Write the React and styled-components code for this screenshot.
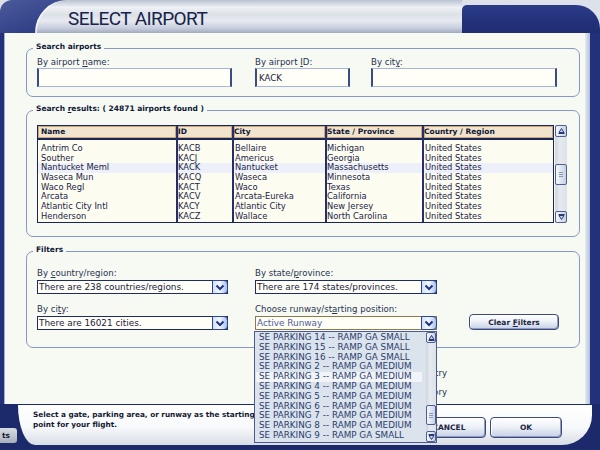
import React from 'react';
import styled, { createGlobalStyle } from 'styled-components';

const NAVY = '#22317a';
const PANEL = '#f6faf3';
const FONT = '"DejaVu Sans", Verdana, sans-serif';

const GlobalStyle = createGlobalStyle`
  html, body { margin: 0; padding: 0; background: #dde2ea; }
  body { font-family: ${FONT}; }
  #root { width: 600px; height: 450px; }
`;

const Window = styled.div`
  width: 600px;
  height: 450px;
  overflow: hidden;
  display: flex;
  flex-direction: column;
  background: #dde2ea;
  font-family: ${FONT};
`;

/* ---------- title ---------- */
const TitleBar = styled.div`
  display: flex;
  height: 33px;
  flex-shrink: 0;
`;
const TitleLeft = styled.div`
  width: 462px;
  box-sizing: border-box;
  padding-left: 35px;
  background: linear-gradient(160deg, #4a5a9a 0%, #26357e 30%, #1e2c70 100%);
  border-top-left-radius: 12px;
`;
const TitleTab = styled.div`
  height: 33px;
  box-sizing: border-box;
  padding: 6px 0 0 33px;
  border-top-left-radius: 32px 33px;
  background: linear-gradient(180deg, #b9c2d1 0%, #eef1f5 22%, #dce1e8 45%, #e7eaef 62%, #c7cede 85%, #a1abbe 100%);
  box-shadow: inset 2px 0 0 rgba(255,255,255,0.6);
  font: 400 19px/26px Roboto, "Liberation Sans", sans-serif;
  letter-spacing: -0.6px;
  color: #18224a;
  white-space: nowrap;
`;
const TitleRight = styled.div`
  flex: 1;
  margin-top: 5px;
  background: linear-gradient(180deg, #2c3c88 0%, #22317a 60%, #1f2d72 100%);
  border-top-left-radius: 5px;
  border-top-right-radius: 24px;
`;

/* ---------- body ---------- */
const Body = styled.div`
  display: flex;
  height: 371px;
  flex-shrink: 0;
`;
const LeftFrame = styled.div`
  width: 4px;
  background: ${NAVY};
`;
const RightFrame = styled.div`
  width: 15px;
  background: linear-gradient(to right, #e6ebf3 0, #b2bfda 5px, ${NAVY} 5px);
`;
const Panel = styled.div`
  flex: 1;
  box-sizing: border-box;
  background: ${PANEL};
  border-left: 1px solid #9fb0dc;
  padding: 15px 5px 0 21px;
  display: flex;
  flex-direction: column;
`;

const Group = styled.div`
  position: relative;
  border: 1px solid #8797c6;
  border-radius: 7px;
  padding: ${p => p.$pad};
  margin-top: ${p => p.$mt || 0}px;
`;
const Legend = styled.span`
  position: absolute;
  top: -7px;
  left: 6px;
  padding: 0 3px;
  background: ${PANEL};
  font: bold 7.5px/10px ${FONT};
  color: #0e1638;
  white-space: nowrap;
`;

const Row = styled.div`
  display: flex;
  align-items: flex-end;
  margin-top: ${p => p.$mt || 0}px;
`;
const Field = styled.div`
  position: relative;
  display: flex;
  flex-direction: column;
  gap: ${p => p.$gap}px;
  width: ${p => p.$w}px;
  margin-left: ${p => p.$ml || 0}px;
`;
const Label = styled.label`
  font: 8.6px/10px ${FONT};
  color: #283050;
  white-space: nowrap;
`;
const TextInput = styled.input`
  height: 19px;
  box-sizing: border-box;
  margin: 0;
  border: 1px solid #a6b5d7;
  border-left: 2px solid #3b4b83;
  border-right: 2px solid #3b4b83;
  background: #fffef7;
  padding: 0 0 0 2px;
  font: 8.6px ${FONT};
  color: #1a2040;
  outline: none;
`;

/* ---------- combo ---------- */
const Combo = styled.div`
  display: flex;
  height: 14px;
  box-sizing: border-box;
  border: 1px solid ${p => (p.$focus ? '#8a7a4c' : '#1f2c62')};
  background: #fffef7;
`;
const ComboText = styled.span`
  flex: 1;
  padding-left: 1px;
  font: 8.9px/12px ${FONT};
  color: ${p => (p.$muted ? '#51609a' : '#1a2044')};
  white-space: nowrap;
  overflow: hidden;
`;
const ComboButton = styled.span`
  width: 16px;
  height: 14px;
  box-sizing: border-box;
  margin: -1px -1px -1px 0;
  border: 1px solid #2f4490;
  border-radius: 0 4px 4px 0;
  background: linear-gradient(90deg, #cfe0fa 0%, #f4f8ff 45%, #a9c2ec 100%);
  display: flex;
  align-items: center;
  justify-content: center;
`;

const Chevron = () => (
  <svg width="10" height="7" viewBox="0 0 10 7">
    <path d="M1.5 1.5 L5 5 L8.5 1.5" fill="none" stroke="#1f3485" strokeWidth="2" />
  </svg>
);

/* ---------- table ---------- */
const TableWrap = styled.div`
  display: flex;
  gap: 1px;
`;
const Table = styled.div`
  display: flex;
  height: 98px;
  box-sizing: border-box;
  border: 1px solid #1b2554;
  background: #fdfcf1;
`;
const Column = styled.div`
  display: flex;
  flex-direction: column;
  width: ${p => p.$w}px;
  box-sizing: border-box;
  border-left: ${p => (p.$first ? 'none' : '2px solid #263068')};
`;
const HeaderCell = styled.div`
  height: 12px;
  border-bottom: 2px solid #1b2554;
  background: #f1e4ce;
  box-shadow: inset 1px 1px 0 #c9a77f, inset -1px -1px 0 #c9a77f;
  padding-left: ${p => p.$pad}px;
  font: bold 7.5px/12px ${FONT};
  color: #0f1736;
  white-space: nowrap;
  overflow: hidden;
`;
const CellList = styled.div`
  padding-top: 4px;
`;
const Cell = styled.div`
  height: 9.7px;
  padding-left: ${p => p.$pad}px;
  font: 8.35px/9.7px ${FONT};
  color: #1c2448;
  white-space: nowrap;
  overflow: hidden;
  background: ${p => (p.$active ? '#edf0fa' : 'transparent')};
`;

/* ---------- scrollbar ---------- */
const ScrollBar = styled.div`
  display: flex;
  flex-direction: column;
  width: ${p => p.$w}px;
  background: linear-gradient(90deg, #cfd5de, #e6eaef 40%, #dde2e9);
`;
const ScrollBtn = styled.div`
  height: ${p => p.$h}px;
  box-sizing: border-box;
  border: 1px solid #4f5f96;
  border-radius: 2px;
  background: linear-gradient(90deg, #f6f8fc, #c6d1e4);
  display: flex;
  align-items: center;
  justify-content: center;
`;
const ScrollTrack = styled.div`
  flex: 1;
  padding-top: ${p => p.$offset}px;
`;
const Thumb = styled.div`
  height: ${p => p.$h}px;
  box-sizing: border-box;
  border: 1px solid #4f5f96;
  border-radius: 2px;
  background: linear-gradient(90deg, #f6f8fc, #c6d1e4);
  display: flex;
  flex-direction: column;
  align-items: center;
  justify-content: center;
  gap: 1px;
`;
const Grip = styled.span`
  width: 4px;
  height: 1px;
  background: #8a96b8;
`;

const Arrow = ({ down }) => (
  <svg width="7" height="6" viewBox="0 0 7 6">
    <path
      d={down ? 'M0.5 0.5h6M1 1.5l2.5 4 2.5-4z' : 'M0.5 5.5h6M1 4.5l2.5-4 2.5 4z'}
      stroke="#2a3a78"
      fill="#c9d3e8"
      strokeWidth="1"
    />
  </svg>
);

const Scroller = ({ w, btn, offset, thumb }) => (
  <ScrollBar $w={w}>
    <ScrollBtn $h={btn}><Arrow /></ScrollBtn>
    <ScrollTrack $offset={offset}>
      <Thumb $h={thumb}><Grip /><Grip /><Grip /></Thumb>
    </ScrollTrack>
    <ScrollBtn $h={btn}><Arrow down /></ScrollBtn>
  </ScrollBar>
);

/* ---------- buttons ---------- */
const ActionButton = styled.button`
  width: ${p => p.$w}px;
  height: ${p => p.$h}px;
  margin: 0;
  padding: 0;
  box-sizing: border-box;
  border: 1px solid #3c4a7c;
  border-radius: 4px;
  background: linear-gradient(180deg, #ffffff 0%, #eef2f8 45%, #c6d1e5 100%);
  box-shadow: inset -1px -1px 0 #8f9dc0, inset 1px 1px 0 #ffffff;
  font: bold 7.5px ${FONT};
  color: #1d2640;
  white-space: nowrap;
  text-align: center;
`;

/* ---------- popup list ---------- */
const ListPopup = styled.div`
  position: absolute;
  top: calc(100% + 1px);
  left: -1px;
  width: 183px;
  height: 112px;
  box-sizing: border-box;
  border: 1px solid #4b5b8f;
  background: #dbe3ed;
  display: flex;
  z-index: 5;
`;
const ListItems = styled.div`
  flex: 1;
  padding: 1px 4px 0 1px;
`;
const ListItem = styled.div`
  height: 9.8px;
  padding-left: 3px;
  font: 8.8px/9.8px ${FONT};
  color: #2c3d6e;
  white-space: nowrap;
  background: ${p => (p.$active ? '#f2f5f8' : 'transparent')};
`;

const OptionList = styled.div`
  width: 421px;
  margin-top: 20px;
  display: flex;
  flex-direction: column;
  align-items: flex-end;
  gap: 9px;
`;
const OptionText = styled.span`
  font: 8.6px/10px ${FONT};
  color: #283050;
  white-space: nowrap;
`;

/* ---------- footer ---------- */
const Footer = styled.div`
  flex: 1;
  display: flex;
  align-items: flex-start;
  background: #1c2a6c;
`;
const BackTab = styled.div`
  width: 17px;
  height: 15px;
  margin-top: 24px;
  box-sizing: border-box;
  border-radius: 0 3px 3px 0;
  background: linear-gradient(180deg, #d8dce3, #a9afbb);
  font: bold 7.5px/15px ${FONT};
  color: #141a30;
  text-align: right;
  padding-right: 7px;
  overflow: hidden;
  white-space: nowrap;
`;
const HelpTab = styled.div`
  margin: 1px 0 0 1px;
  width: 574px;
  height: 40px;
  box-sizing: border-box;
  padding: 5px 0 0 15px;
  display: flex;
  align-items: flex-start;
  border-bottom-left-radius: 17px 40px;
  border-bottom-right-radius: 30px;
  background: linear-gradient(180deg, #ffffff 0%, #f8f9fb 55%, #d8dde5 100%);
`;
const HelpText = styled.p`
  margin: 0;
  font: bold 7.3px/10px ${FONT};
  color: #121a34;
  white-space: nowrap;
`;
const ButtonRow = styled.div`
  margin: 7px 30px 0 auto;
  display: flex;
  gap: 4px;
`;

const columns = [
  { title: 'Name', w: 138, pad: 3, first: true },
  { title: 'ID', w: 56, pad: 0 },
  { title: 'City', w: 93, pad: 1 },
  { title: 'State / Province', w: 97, pad: 0 },
  { title: 'Country / Region', w: 131, pad: 1 },
];

const rows = [
  ['Antrim Co', 'KACB', 'Bellaire', 'Michigan', 'United States'],
  ['Souther', 'KACJ', 'Americus', 'Georgia', 'United States'],
  ['Nantucket Meml', 'KACK', 'Nantucket', 'Massachusetts', 'United States'],
  ['Waseca Mun', 'KACQ', 'Waseca', 'Minnesota', 'United States'],
  ['Waco Regl', 'KACT', 'Waco', 'Texas', 'United States'],
  ['Arcata', 'KACV', 'Arcata-Eureka', 'California', 'United States'],
  ['Atlantic City Intl', 'KACY', 'Atlantic City', 'New Jersey', 'United States'],
  ['Henderson', 'KACZ', 'Wallace', 'North Carolina', 'United States'],
];

const parking = [
  'SE PARKING 14 -- RAMP GA SMALL',
  'SE PARKING 15 -- RAMP GA SMALL',
  'SE PARKING 16 -- RAMP GA SMALL',
  'SE PARKING 2 -- RAMP GA MEDIUM',
  'SE PARKING 3 -- RAMP GA MEDIUM',
  'SE PARKING 4 -- RAMP GA MEDIUM',
  'SE PARKING 5 -- RAMP GA MEDIUM',
  'SE PARKING 6 -- RAMP GA MEDIUM',
  'SE PARKING 7 -- RAMP GA MEDIUM',
  'SE PARKING 8 -- RAMP GA MEDIUM',
  'SE PARKING 9 -- RAMP GA SMALL',
];

export default function App() {
  return (
    <>
      <GlobalStyle />
      <Window>
        <TitleBar>
          <TitleLeft>
            <TitleTab>SELECT AIRPORT</TitleTab>
          </TitleLeft>
          <TitleRight />
        </TitleBar>

        <Body>
          <LeftFrame />
          <Panel>
            <Group $pad="8px 22px 9px 10px">
              <Legend>Search airports</Legend>
              <Row>
                <Field $w={195} $gap={1}>
                  <Label>By airport <u>n</u>ame:</Label>
                  <TextInput readOnly value="" />
                </Field>
                <Field $w={95} $ml={23} $gap={1}>
                  <Label>By airport <u>I</u>D:</Label>
                  <TextInput readOnly value="KACK" />
                </Field>
                <Field $w={186} $ml={21} $gap={1}>
                  <Label>By cit<u>y</u>:</Label>
                  <TextInput readOnly value="" />
                </Field>
              </Row>
            </Group>

            <Group $mt={13} $pad="14px 12px 13px 10px">
              <Legend>Search <u>r</u>esults: ( 24871 airports found )</Legend>
              <TableWrap>
                <Table>
                  {columns.map((c, ci) => (
                    <Column key={c.title} $w={c.w} $first={c.first}>
                      <HeaderCell $pad={c.first ? 3 : 0}>{c.title}</HeaderCell>
                      <CellList>
                        {rows.map((r, ri) => (
                          <Cell key={ri} $pad={c.pad} $active={ri === 2}>{r[ci]}</Cell>
                        ))}
                      </CellList>
                    </Column>
                  ))}
                </Table>
                <Scroller w={12} btn={12} offset={27} thumb={21} />
              </TableWrap>
            </Group>

            <Group $mt={14} $pad="16px 0 17px 10px">
              <Legend>Filters</Legend>
              <Row>
                <Field $w={191} $gap={2}>
                  <Label>By <u>c</u>ountry/region:</Label>
                  <Combo>
                    <ComboText>There are 238 countries/regions.</ComboText>
                    <ComboButton><Chevron /></ComboButton>
                  </Combo>
                </Field>
                <Field $w={182} $ml={27} $gap={2}>
                  <Label>By state/<u>p</u>rovince:</Label>
                  <Combo>
                    <ComboText>There are 174 states/provinces.</ComboText>
                    <ComboButton><Chevron /></ComboButton>
                  </Combo>
                </Field>
              </Row>
              <Row $mt={10}>
                <Field $w={191} $gap={2}>
                  <Label>By ci<u>t</u>y:</Label>
                  <Combo>
                    <ComboText>There are 16021 cities.</ComboText>
                    <ComboButton><Chevron /></ComboButton>
                  </Combo>
                </Field>
                <Field $w={182} $ml={27} $gap={2}>
                  <Label>Choose runway/st<u>a</u>rting position:</Label>
                  <Combo $focus>
                    <ComboText $muted>Active Runway</ComboText>
                    <ComboButton><Chevron /></ComboButton>
                  </Combo>
                  <ListPopup>
                    <ListItems>
                      {parking.map((p, i) => (
                        <ListItem key={p} $active={i === 4}>{p}</ListItem>
                      ))}
                    </ListItems>
                    <Scroller w={10} btn={11} offset={62} thumb={20} />
                  </ListPopup>
                </Field>
                <Field $w={90} $ml={32} $gap={0}>
                  <ActionButton $w={90} $h={16}>
                    <span>Clear <u>F</u>ilters</span>
                  </ActionButton>
                </Field>
              </Row>
            </Group>

            <OptionList>
              <OptionText>Country</OptionText>
              <OptionText>Territory</OptionText>
            </OptionList>
          </Panel>
          <RightFrame />
        </Body>

        <Footer>
          <BackTab>ts</BackTab>
          <HelpTab>
            <HelpText>
              Select a gate, parking area, or runway as the starting
              <br />
              point for your flight.
            </HelpText>
            <ButtonRow>
              <ActionButton $w={74} $h={21}>CANCEL</ActionButton>
              <ActionButton $w={72} $h={21}>OK</ActionButton>
            </ButtonRow>
          </HelpTab>
        </Footer>
      </Window>
    </>
  );
}
